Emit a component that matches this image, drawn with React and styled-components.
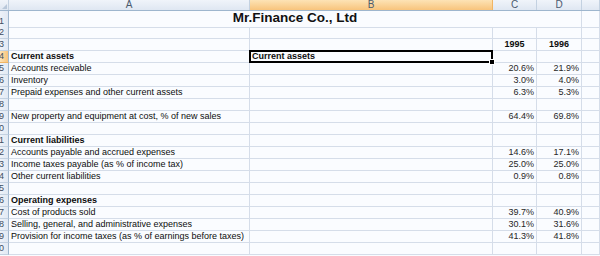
import styled, { createGlobalStyle } from 'styled-components';

const GlobalStyle = createGlobalStyle`
  html, body {
    margin: 0;
    padding: 0;
    background: #ffffff;
  }
  body {
    font-family: "Liberation Sans", Arial, sans-serif;
    overflow: hidden;
  }
`;

const COLUMNS = '9px 241px 243px 44px 45px 1fr';

const Sheet = styled.div`
  width: 600px;
  height: 256px;
  overflow: hidden;
  background: #fafcff;
  font-family: "Liberation Sans", Arial, sans-serif;
`;

const HeaderRow = styled.div`
  display: grid;
  grid-template-columns: ${COLUMNS};
  height: 11px;
  border-bottom: 1px solid #9eb6ce;
  box-sizing: border-box;
`;

const ColHeader = styled.div`
  display: flex;
  align-items: center;
  justify-content: center;
  box-sizing: border-box;
  border-right: 1px solid ${(p) => (p.$active ? '#f1b564' : '#c3d1e1')};
  background: ${(p) =>
    p.$active
      ? 'linear-gradient(#fde3b5, #f8c47c)'
      : 'linear-gradient(#f0f4fa, #dfe7f2)'};
  font-size: 10px;
  line-height: 10px;
  color: #4b5a6e;
`;

const Corner = styled(ColHeader)`
  position: relative;
  &::after {
    content: '';
    position: absolute;
    right: 1px;
    bottom: 1px;
    border-left: 5px solid transparent;
    border-bottom: 5px solid #b9c8da;
  }
`;

const Row = styled.div`
  display: grid;
  grid-template-columns: ${COLUMNS};
  height: ${(p) => p.$height}px;
`;

// row numbers are clipped on the left, as in the cropped sheet
const RowHeader = styled.div`
  display: flex;
  justify-content: flex-end;
  align-items: flex-end;
  overflow: hidden;
  box-sizing: border-box;
  padding: 0 4px 1px 0;
  border-right: 1px solid #9eb6ce;
  border-bottom: 1px solid ${(p) => (p.$active ? '#f1b564' : '#c3d1e1')};
  background: ${(p) =>
    p.$active
      ? 'linear-gradient(90deg, #fde3b5, #f8c47c)'
      : 'linear-gradient(90deg, #edf2f9, #e2e9f3)'};
  font-size: 9px;
  line-height: 10px;
  color: #3f4d60;
  white-space: nowrap;
`;

const Cell = styled.div`
  position: relative;
  display: flex;
  align-items: flex-end;
  justify-content: ${(p) =>
    p.$align === 'right' ? 'flex-end' : p.$align === 'center' ? 'center' : 'flex-start'};
  grid-column: ${(p) => (p.$span ? `span ${p.$span}` : 'auto')};
  box-sizing: border-box;
  padding: 0 2px 1px 2px;
  border-right: 1px solid #d5dde9;
  border-bottom: 1px solid #d5dde9;
  font-size: 9px;
  line-height: 10px;
  font-weight: ${(p) => (p.$bold ? 700 : 400)};
  color: ${(p) => (p.$align === 'right' ? '#262626' : '#0d0d0d')};
  white-space: nowrap;

  ${(p) =>
    p.$selected &&
    `
    &::before {
      content: '';
      position: absolute;
      top: -1px;
      left: -1px;
      right: -1px;
      bottom: -1px;
      border: 2px solid #000;
      z-index: 2;
    }
    &::after {
      content: '';
      position: absolute;
      right: -3px;
      bottom: -3px;
      width: 4px;
      height: 4px;
      background: #000;
      border: 1px solid #fff;
      z-index: 3;
    }
  `}
`;

const Title = styled(Cell)`
  justify-content: center;
  padding-bottom: 2px;
  font-size: 13.5px;
  line-height: 14px;
  font-weight: 700;
  color: #111;
`;

const rows = [
  { label: 'Current assets', bold: true, selected: true },
  { label: 'Accounts receivable', c: '20.6%', d: '21.9%' },
  { label: 'Inventory', c: '3.0%', d: '4.0%' },
  { label: 'Prepaid expenses and other current assets', c: '6.3%', d: '5.3%' },
  {},
  { label: 'New property and equipment at cost, % of new sales', c: '64.4%', d: '69.8%' },
  {},
  { label: 'Current liabilities', bold: true },
  { label: 'Accounts payable and accrued expenses', c: '14.6%', d: '17.1%' },
  { label: 'Income taxes payable (as % of income tax)', c: '25.0%', d: '25.0%' },
  { label: 'Other current liabilities', c: '0.9%', d: '0.8%' },
  {},
  { label: 'Operating expenses', bold: true },
  { label: 'Cost of products sold', c: '39.7%', d: '40.9%' },
  { label: 'Selling, general, and administrative expenses', c: '30.1%', d: '31.6%' },
  { label: 'Provision for income taxes (as % of earnings before taxes)', c: '41.3%', d: '41.8%' },
  {},
];

export default function App() {
  return (
    <>
      <GlobalStyle />
      <Sheet>
        <HeaderRow>
          <Corner />
          <ColHeader>A</ColHeader>
          <ColHeader $active>B</ColHeader>
          <ColHeader>C</ColHeader>
          <ColHeader>D</ColHeader>
          <ColHeader />
        </HeaderRow>

        <Row $height={16}>
          <RowHeader>1</RowHeader>
          <Title $span={4}>Mr.Finance Co., Ltd</Title>
          <Cell />
        </Row>

        <Row $height={12}>
          <RowHeader>2</RowHeader>
          <Cell />
          <Cell />
          <Cell />
          <Cell />
          <Cell />
        </Row>

        <Row $height={12}>
          <RowHeader>3</RowHeader>
          <Cell />
          <Cell />
          <Cell $align="center" $bold>1995</Cell>
          <Cell $align="center" $bold>1996</Cell>
          <Cell />
        </Row>

        {rows.map((r, i) => {
          const n = i + 4;
          return (
            <Row $height={12} key={n}>
              <RowHeader $active={r.selected}>{n}</RowHeader>
              <Cell $bold={r.bold}>{r.label}</Cell>
              <Cell $bold={r.bold} $selected={r.selected}>
                {r.selected ? r.label : null}
              </Cell>
              <Cell $align="right">{r.c}</Cell>
              <Cell $align="right">{r.d}</Cell>
              <Cell />
            </Row>
          );
        })}
      </Sheet>
    </>
  );
}
